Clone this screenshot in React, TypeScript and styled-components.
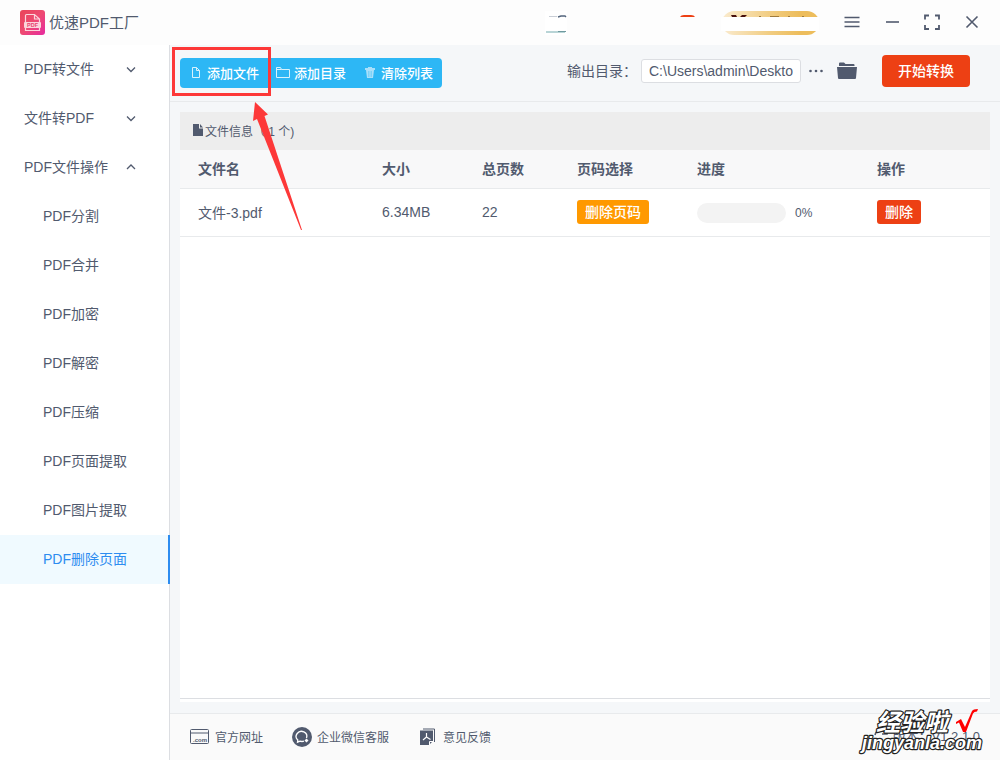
import React from "react";
import styled, { createGlobalStyle } from "styled-components";

const ink = "#515a6e";
const red = "#ed4014";

const GlobalStyle = createGlobalStyle`
  * { box-sizing: border-box; }
  body { margin: 0; background: #fff; }
  body, button, input {
    font-family: "Liberation Sans", "Noto Sans CJK SC", sans-serif;
    font-size: 14px;
    color: ${ink};
  }
  button { border: 0; padding: 0; background: none; cursor: pointer; }
  svg { display: block; flex: none; }
`;

const Page = styled.div`
  position: relative;
  display: flex;
  flex-direction: column;
  min-height: 100vh;
`;

const TitleBar = styled.header`
  display: flex;
  align-items: center;
  height: 45px;
  padding: 0 20px;
  background: #fdfdfd;
`;

const AppName = styled.h1`
  flex: 1;
  margin: 0 0 0 4px;
  padding-bottom: 2px;
  font-size: 15px;
  font-weight: 400;
`;

const AccountArea = styled.div`
  width: 274px;
  height: 24px;
  margin-right: 23px;
`;

const WindowButtons = styled.div`
  display: flex;
  gap: 20px;
  margin-right: -2px;
`;

const WindowButton = styled.button`
  width: 20px;
  height: 20px;
`;

const Body = styled.div`
  display: flex;
  flex: 1;
`;

const Sidebar = styled.nav`
  flex: none;
  width: 170px;
  border-right: 1px solid #dcdee2;
`;

const MenuGroup = styled.button`
  display: flex;
  align-items: center;
  justify-content: space-between;
  width: 100%;
  height: 49px;
  padding: 0 32px 3px 24px;
`;

const MenuItem = styled.a<{ $active?: boolean }>`
  display: flex;
  align-items: center;
  height: 49px;
  margin-right: -1px;
  padding: 0 0 3px 43px;
  color: ${(p) => (p.$active ? "#2d8cf0" : ink)};
  background: ${(p) => (p.$active ? "#f0faff" : "none")};
  border-right: ${(p) => (p.$active ? "2px solid #2d8cf0" : "0")};
  text-decoration: none;
`;

const Main = styled.main`
  display: flex;
  flex: 1;
  flex-direction: column;
  min-width: 0;
  background: #f5f7f9;
`;

const Toolbar = styled.div`
  display: flex;
  align-items: center;
  height: 57px;
  padding: 0 30px 4px 10px;
  border-bottom: 1px solid #e8eaec;
`;

const ButtonGroup = styled.div`
  position: relative;
  display: flex;
  margin-top: 4px;
  padding-right: 1px;
  border-radius: 4px;
  background: #2db7f5;
`;

const ToolButton = styled.button`
  display: flex;
  align-items: center;
  gap: 4px;
  height: 30px;
  padding: 0 8px 2px 9px;
  font-size: 13px;
  font-weight: 500;
  color: #fff;
`;

const Highlight = styled.span`
  position: absolute;
  top: -11px;
  left: -8px;
  width: 99px;
  height: 49px;
  border: 3px solid #fd3838;
  pointer-events: none;
`;

const Arrow = styled.svg`
  position: absolute;
  top: 44px;
  left: 72px;
  z-index: 2;
  pointer-events: none;
`;

const OutputGroup = styled.div`
  display: flex;
  align-items: center;
  margin-left: auto;
`;

const OutputLabel = styled.label`
  padding-bottom: 3px;
`;

const PathInput = styled.input`
  width: 160px;
  height: 24px;
  margin-left: 4px;
  padding: 0 7px;
  border: 1px solid #dcdee2;
  border-radius: 3px;
  background: #fff;
`;

const IconButton = styled.button`
  margin-left: 8px;
`;

const StartButton = styled.button`
  width: 88px;
  height: 32px;
  margin-left: 25px;
  padding-bottom: 2px;
  border-radius: 4px;
  font-weight: 500;
  color: #fff;
  background: ${red};
`;

const Card = styled.section`
  display: flex;
  flex: 1;
  flex-direction: column;
  margin: 10px 10px 11px;
  padding-bottom: 3px;
  background: #fff;
`;

const CardTitle = styled.h2`
  display: flex;
  align-items: center;
  gap: 1px;
  height: 38px;
  margin: 0;
  padding: 0 0 2px 12px;
  font-size: 12px;
  font-weight: 400;
  background: #ededed;
`;

const CardBody = styled.div`
  flex: 1;
  border-bottom: 1px solid #dcdee2;
`;

const FileTable = styled.table`
  width: 100%;
  border-collapse: separate;
  border-spacing: 0;
  table-layout: fixed;
  th, td {
    padding: 0 0 2px 18px;
    border-bottom: 1px solid #e8eaec;
    text-align: left;
  }
  th { height: 39px; font-weight: 700; background: #f8f8f9; }
  td { height: 48px; }
`;

const Tag = styled.button<{ $color: string }>`
  display: block;
  height: 24px;
  padding: 0 8px 2px;
  border-radius: 3px;
  font-weight: 500;
  color: #fff;
  background: ${(p) => p.$color};
`;

const ProgressCell = styled.div`
  display: flex;
  align-items: center;
  gap: 9px;
  padding-top: 2px;
  font-size: 12px;
`;

const Track = styled.div`
  width: 89px;
  height: 20px;
  border-radius: 10px;
  background: #f3f3f3;
`;

const Footer = styled.footer`
  display: flex;
  align-items: center;
  gap: 29px;
  height: 47px;
  padding: 0 20px;
  border-top: 1px solid #e8eaec;
  background: #fafafa;
`;

const FooterLink = styled.a`
  display: flex;
  align-items: center;
  gap: 5px;
  font-size: 12px;
  color: ${ink};
  text-decoration: none;
`;

const FooterText = styled.span`
  padding-bottom: 2px;
`;

const Version = styled.span`
  display: flex;
  align-items: center;
  gap: 4px;
  margin-left: auto;
  padding-bottom: 4px;
  font-size: 13px;
`;

const Watermark = styled.div`
  position: absolute;
  right: 10px;
  bottom: 2px;
  width: 132px;
  z-index: 3;
  pointer-events: none;
`;

const Chevron = ({ up }: { up?: boolean }) => (
  <svg width="12" height="12" viewBox="0 0 12 12" fill="none" stroke={ink} strokeWidth="1.3">
    <path d={up ? "M2 9l4-4 4 4" : "M2 5.500l4 4 4-4"} />
  </svg>
);

const Logo = () => (
  <svg width="25" height="25" viewBox="0 0 25 25">
    <defs>
      <linearGradient id="logo" x1="0" y1="0" x2="1" y2="1">
        <stop offset="0" stopColor="#e94458" />
        <stop offset="0.5" stopColor="#ee4a72" />
        <stop offset="1" stopColor="#e62aa0" />
      </linearGradient>
    </defs>
    <rect width="25" height="25" rx="3" fill="url(#logo)" />
    <g fill="none" stroke="#fbd5dc" strokeWidth="1.2">
      <path d="M5.500 12V5.500q0-1 1-1h8l5 4.500v3M14.500 4.500V9h5" />
      <path d="M5.500 18v2.500h14V18" />
    </g>
    <rect x="4" y="12" width="17" height="6" rx="1" fill="#fbd5dc" />
    <text x="12.500" y="17" textAnchor="middle" fontSize="5.500" fontWeight="700" fill="#e8406f" fontFamily="Liberation Sans">PDF</text>
  </svg>
);

const subItems = ["PDF分割", "PDF合并", "PDF加密", "PDF解密", "PDF压缩", "PDF页面提取", "PDF图片提取", "PDF删除页面"];
const columns: [string, number?][] = [["文件名", 184], ["大小", 100], ["总页数", 95], ["页码选择", 120], ["进度", 180], ["操作"]];

export default function App() {
  return (
    <Page>
      <GlobalStyle />
      <TitleBar>
        <Logo />
        <AppName>优速PDF工厂</AppName>
        <AccountArea>
          <svg width="274" height="24" viewBox="0 0 274 24">
            <defs>
              <linearGradient id="gold">
                <stop offset="0" stopColor="#faebcf" />
                <stop offset="0.500" stopColor="#f1cc80" />
                <stop offset="0.800" stopColor="#edbd5c" />
              </linearGradient>
            </defs>
            <rect width="22" height="24" fill="#fff" />
            <path d="M4 5.500h8" stroke="#c9ced6" />
            <path d="M13 6l3-1h4l1 1" stroke="#53647c" strokeWidth="1.400" fill="none" />
            <path d="M1 21h19" stroke="#b8d4d6" strokeWidth="2" />
            <path d="M13 20.500h8" stroke="#6f9a9f" />
            <path d="M135 6q1-2 4-2h7q3 0 4 2z" fill="#ed4014" />
            <rect x="177" y="0" width="97" height="24" rx="12" fill="url(#gold)" />
            <path d="M186 4h5l1 2h-5zM197 4h5l-2 2h-5z" fill="#48100c" />
            <path d="M214 5.500h2M225 5.500h9M243 5.500h2M257 5.500h2" stroke="#a07b3c" />
            <rect x="176" y="6" width="98" height="14" fill="#fff" />
          </svg>
        </AccountArea>
        <WindowButtons>
          <WindowButton aria-label="菜单">
            <svg width="20" height="20" stroke={ink} strokeWidth="1.600"><path d="M2.500 4.500h15M2.500 9h15M2.500 13.500h15" /></svg>
          </WindowButton>
          <WindowButton aria-label="最小化">
            <svg width="20" height="20" stroke={ink} strokeWidth="1.600"><path d="M4 9h13" /></svg>
          </WindowButton>
          <WindowButton aria-label="最大化">
            <svg width="20" height="20" stroke={ink} strokeWidth="1.800" fill="none"><path d="M3 6.500V2.500h4M13 2.500h4v4M17 12v4h-4M7 16H3v-4" /></svg>
          </WindowButton>
          <WindowButton aria-label="关闭">
            <svg width="20" height="20" stroke={ink} strokeWidth="1.600"><path d="M4.500 3.500l11 11M15.500 3.500l-11 11" /></svg>
          </WindowButton>
        </WindowButtons>
      </TitleBar>

      <Body>
        <Sidebar>
          <MenuGroup>PDF转文件<Chevron /></MenuGroup>
          <MenuGroup>文件转PDF<Chevron /></MenuGroup>
          <MenuGroup>PDF文件操作<Chevron up /></MenuGroup>
          {subItems.map((name) => (
            <MenuItem key={name} href="#" $active={name === "PDF删除页面"}>{name}</MenuItem>
          ))}
        </Sidebar>

        <Main>
          <Toolbar>
            <ButtonGroup>
              <ToolButton>
                <svg width="14" height="14" fill="none" stroke="#d8f2fd"><path d="M3.500 2.500h4l3 3v7h-7zM7.500 2.500v3h3" /></svg>
                添加文件
              </ToolButton>
              <ToolButton>
                <svg width="14" height="14" fill="none" stroke="#d8f2fd"><path d="M.500 12.500v-10h4l1 2h8v8zM.500 4.500h5" /></svg>
                添加目录
              </ToolButton>
              <ToolButton>
                <svg width="14" height="14" fill="#a9dffa"><path d="M5 2h4v1h3v2H2V3h3zM3 5h8l-1 8H4z" /><path d="M5.500 6v6M7 6v6M8.500 6v6" stroke="#69cbf7" strokeWidth=".7" /></svg>
                清除列表
              </ToolButton>
              <Highlight />
              <Arrow width="54" height="132" viewBox="0 0 54 132">
                <path d="M3 0L16 12.500L12.500 14L50 128L49 128L5 17L1 19z" fill="#fd3838" />
              </Arrow>
            </ButtonGroup>
            <OutputGroup>
              <OutputLabel htmlFor="output">输出目录：</OutputLabel>
              <PathInput id="output" defaultValue="C:\Users\admin\Deskto" />
              <IconButton aria-label="浏览">
                <svg width="14" height="14" fill={ink}><circle cx="1.500" cy="7" r="1.300" /><circle cx="7" cy="7" r="1.300" /><circle cx="12.500" cy="7" r="1.300" /></svg>
              </IconButton>
              <IconButton aria-label="打开目录">
                <svg width="26" height="18" viewBox="-6 0 26 18" fill={ink}><path d="M2 4V1.500Q2 .500 3 .500h4l1.500 1.500h8q1 0 1 1V4zM0 5h20l-1 11q0 1-1 1H2q-1 0-1-1z" /></svg>
              </IconButton>
              <StartButton>开始转换</StartButton>
            </OutputGroup>
          </Toolbar>

          <Card>
            <CardTitle>
              <svg width="12" height="14" fill={ink}><path d="M1 1h6v4.500h4V13H1zM8 1l3 3.500H8z" /></svg>
              <span>文件信息（ 1 个)</span>
            </CardTitle>
            <CardBody>
              <FileTable>
                <colgroup>
                  {columns.map(([name, width]) => <col key={name} width={width} />)}
                </colgroup>
                <thead>
                  <tr>{columns.map(([name]) => <th key={name}>{name}</th>)}</tr>
                </thead>
                <tbody>
                  <tr>
                    <td>文件-3.pdf</td>
                    <td>6.34MB</td>
                    <td>22</td>
                    <td><Tag $color="#ff9900">删除页码</Tag></td>
                    <td><ProgressCell><Track />0%</ProgressCell></td>
                    <td><Tag $color={red}>删除</Tag></td>
                  </tr>
                </tbody>
              </FileTable>
            </CardBody>
          </Card>

          <Footer>
            <FooterLink href="#">
              <svg width="20" height="16" viewBox="0 0 20 16" fill="none" stroke={ink}>
                <rect x=".5" y=".5" width="18" height="14" rx="1" /><path d="M.5 4h18" />
                <text x="10" y="12.500" textAnchor="middle" fontSize="6" fontWeight="700" fill={ink} stroke="none">.com</text>
              </svg>
              <FooterText>官方网址</FooterText>
            </FooterLink>
            <FooterLink href="#">
              <svg width="20" height="20" viewBox="0 0 20 20">
                <circle cx="10" cy="10" r="10" fill={ink} />
                <path d="M12 14.200q-2 .6-4 0l-2.500 1 .3-2.200a5.300 5 0 1 1 8.700-2" fill="none" stroke="#fff" strokeWidth="1.300" />
                <path d="M14.500 11.500l2 2-2 2-2-2z" fill="#fff" />
              </svg>
              <FooterText>企业微信客服</FooterText>
            </FooterLink>
            <FooterLink href="#">
              <svg width="20" height="18" viewBox="-2 0 20 18">
                <path d="M3 1h11.500v13" fill="none" stroke={ink} />
                <path d="M0 2.500h13V13l-4 4H0z" fill={ink} />
                <path d="M6.500 5v4L3 12M6.500 9l4 2.500" fill="none" stroke="#fff" strokeWidth="1.200" />
                <path d="M9.500 17v-3.500H13" stroke="#fff" fill="none" />
              </svg>
              <FooterText>意见反馈</FooterText>
            </FooterLink>
            <Version>
              <svg width="16" height="16" viewBox="0 0 16 16" fill="none" stroke={ink} strokeWidth="1.500"><path d="M2 8a6 6 0 0 1 11-2M14 2v5H9" /></svg>
              版本：V1.2.1.0
            </Version>
          </Footer>
        </Main>
      </Body>

      <Watermark>
        <svg width="132" height="56" viewBox="0 0 132 56" fill="#fff" stroke="#222" strokeWidth="2.400" strokeLinejoin="round" paintOrder="stroke" fontWeight="700">
          <text x="18" y="29" fontSize="24" fontFamily="Noto Sans CJK SC" fontStyle="italic">经验啦</text>
          <text x="4" y="47" fontSize="18" fontFamily="Liberation Sans" fontStyle="italic">jingyanla.com</text>
          <path d="M98 20l5-3 4 8 7-16q1-2 6-2l-1 2.500q-3 0-4 2l-7 18.500h-3l-4-9.500-3 1.500z" fill="#f00" stroke="none" />
        </svg>
      </Watermark>
    </Page>
  );
}
